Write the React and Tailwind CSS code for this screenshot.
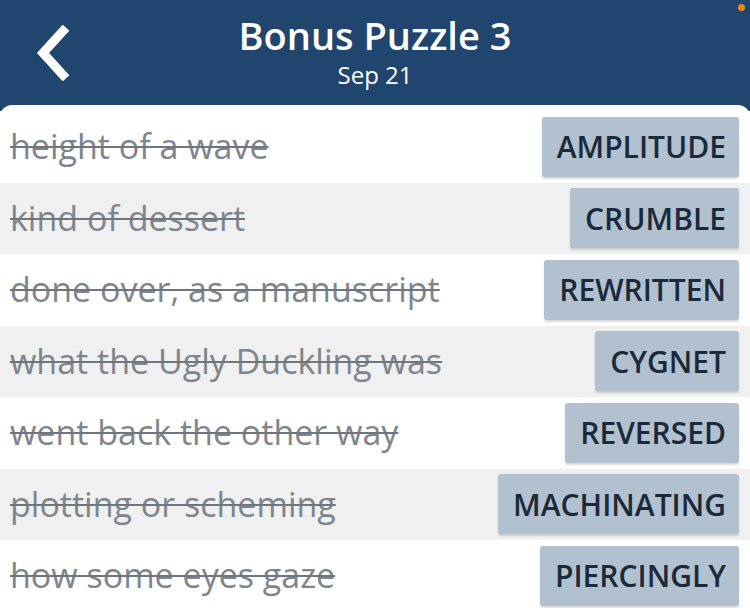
const rows = [
  ['height of a wave', 'AMPLITUDE'],
  ['kind of dessert', 'CRUMBLE'],
  ['done over, as a manuscript', 'REWRITTEN'],
  ['what the Ugly Duckling was', 'CYGNET'],
  ['went back the other way', 'REVERSED'],
  ['plotting or scheming', 'MACHINATING'],
  ['how some eyes gaze', 'PIERCINGLY'],
];

export default function App() {
  return (
    <div className="w-[750px] h-[608px] overflow-hidden bg-[#20466f] font-['Open_Sans',sans-serif]">
      <div className="relative h-[105px] flex flex-col items-center">
        <button className="absolute left-[32px] top-[25px] w-[40px] h-[56px] flex items-center justify-center">
          <svg width="36" height="56" viewBox="0 0 36 56">
            <path d="M29 6 L9 28 L29 50" fill="none" stroke="white" strokeWidth="9" strokeLinecap="square" strokeLinejoin="miter" />
          </svg>
        </button>
        <div className="absolute right-[5px] top-[4px] w-[7px] h-[7px] rounded-full bg-[#e08a1e]" />
        <h1 className="mt-[10px] text-[38px] leading-[50px] font-semibold text-white">Bonus Puzzle 3</h1>
        <div className="text-[24px] leading-[30px] text-white">Sep 21</div>
      </div>
      <div className="bg-white rounded-t-[12px] pt-[6px]">
        {rows.map(([clue, answer], i) => (
          <div
            key={answer}
            className={`h-[71.5px] flex items-center justify-between pl-[10px] pr-[11px] ${i % 2 ? 'bg-[#f0f0f0]' : 'bg-white'}`}
          >
            <span className="text-[34px] text-[#7e858c] line-through decoration-[2px] decoration-[#6e757c]">{clue}</span>
            <span className="h-[60px] flex items-center pl-[15px] pr-[13px] rounded-[3px] bg-[#b1c1cf] shadow-[0_2px_2px_rgba(0,0,0,0.15)] text-[30px] font-semibold text-[#1b2a3a]">
              {answer}
            </span>
          </div>
        ))}
      </div>
    </div>
  );
}
